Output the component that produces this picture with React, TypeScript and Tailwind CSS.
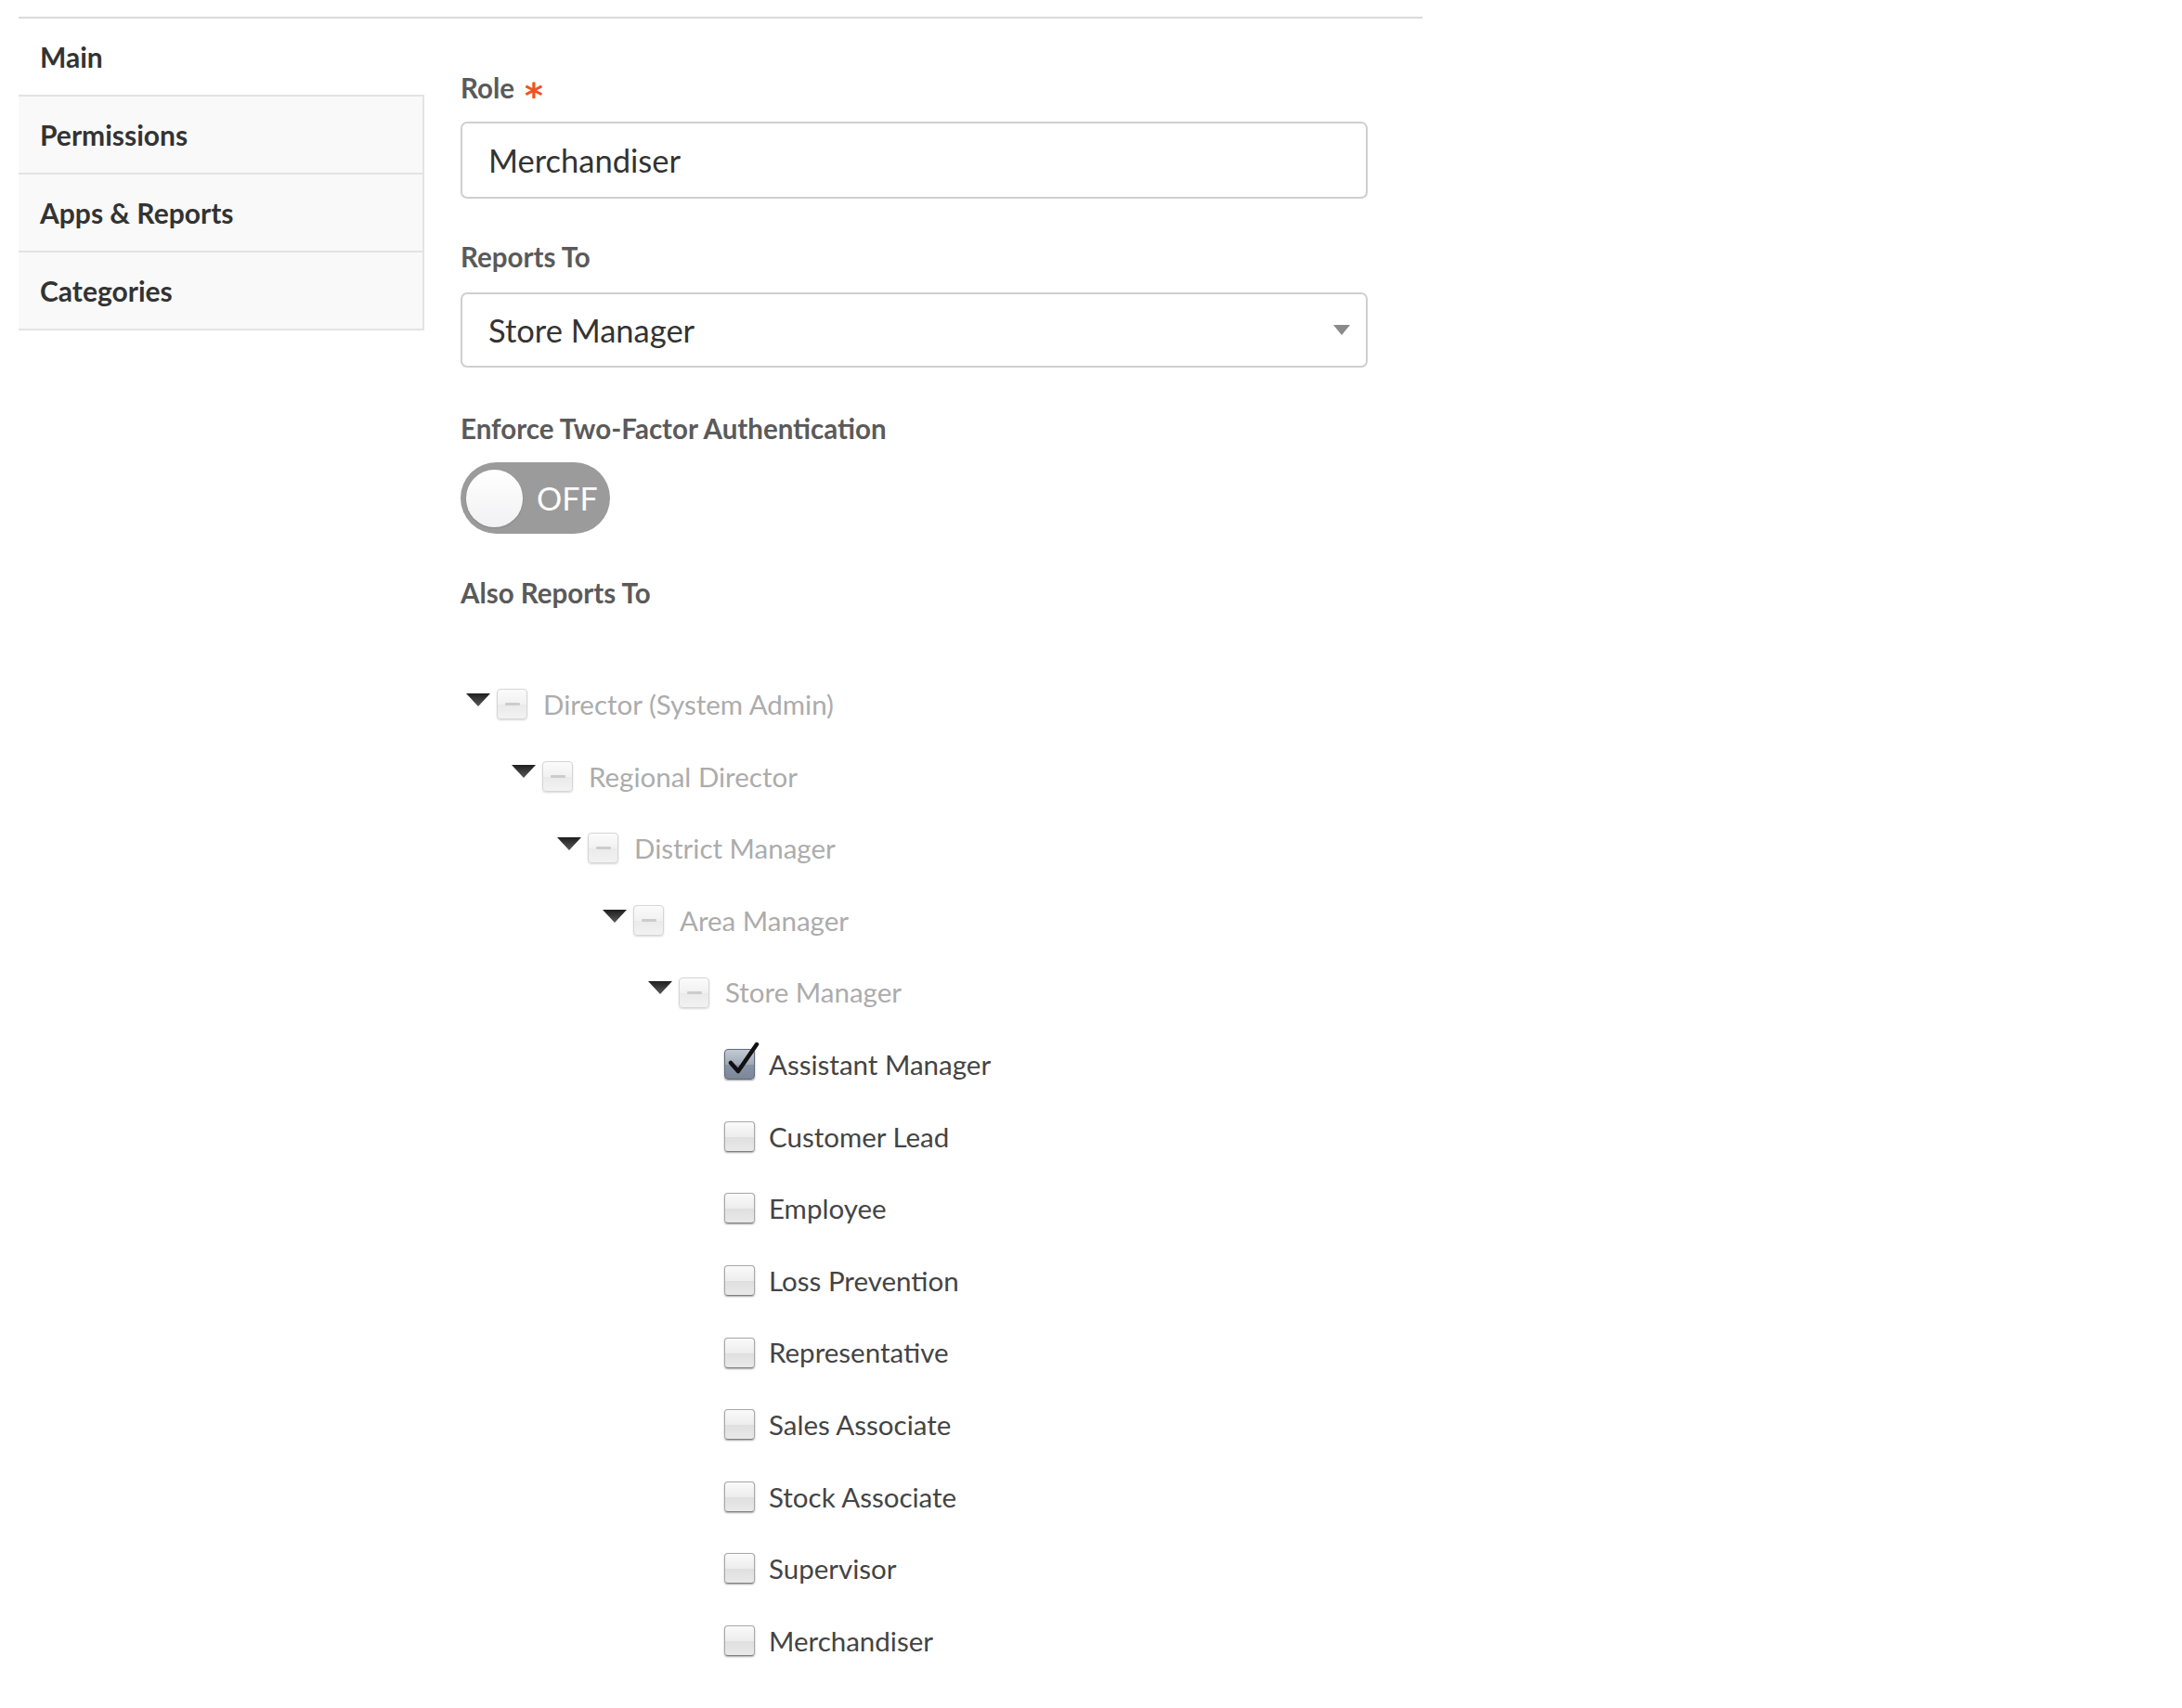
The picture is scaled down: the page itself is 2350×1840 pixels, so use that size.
import React from "react";

const font = { fontFamily: "Lato, 'Noto Sans', sans-serif" };

type State = "parent" | "checked" | "unchecked";

const padByLevel = [
  "pl-[6px]",
  "pl-[55px]",
  "pl-[104px]",
  "pl-[153px]",
  "pl-[202px]",
  "pl-[251px]",
];

function Arrow() {
  return (
    <svg width="26" height="14" viewBox="0 0 26 14" className="-mt-[10px]">
      <defs>
        <linearGradient id="ag" x1="0" y1="0" x2="0" y2="1">
          <stop offset="0" stopColor="#1e1e1e" />
          <stop offset="1" stopColor="#5a5a5a" />
        </linearGradient>
      </defs>
      <polygon points="0,0 26,0 13,14" fill="url(#ag)" />
    </svg>
  );
}

function Box({ state }: { state: State }) {
  if (state === "parent") {
    return (
      <div className="w-[33px] h-[33px] rounded-[4px] border border-[#d6d6d6] bg-[linear-gradient(#fbfbfb,#f1f1f1_50%,#eaeaea_51%,#f2f2f2)] shadow-[0_1px_2px_rgba(0,0,0,0.15)] flex items-center justify-center">
        <div className="w-[16px] h-[3px] bg-[#cccccc] rounded-[1px]" />
      </div>
    );
  }
  if (state === "checked") {
    return (
      <div className="relative w-[33px] h-[33px]">
        <div className="w-[33px] h-[33px] rounded-[4px] border border-[#5f6b7b] bg-[linear-gradient(#c3cad4,#a0aab8_50%,#8894a5_51%,#7c889a)] shadow-[0_1px_2px_rgba(0,0,0,0.4)]" />
        <svg
          width="40"
          height="40"
          viewBox="0 0 40 40"
          className="absolute left-[2px] top-[-8px]"
        >
          <path
            d="M5 23 L13 32 L33 3"
            fill="none"
            stroke="#111"
            strokeWidth="4.5"
            strokeLinecap="round"
            strokeLinejoin="round"
          />
        </svg>
      </div>
    );
  }
  return (
    <div className="w-[33px] h-[33px] rounded-[4px] border border-[#a8a8a8] border-b-[#7f7f7f] bg-[linear-gradient(#fafafa,#ededed_50%,#dfdfdf_51%,#e9e9e9)] shadow-[0_1px_2px_rgba(0,0,0,0.35)]" />
  );
}

function TreeRow({
  level,
  label,
  state,
}: {
  level: number;
  label: string;
  state: State;
}) {
  return (
    <div className={`h-[77.6px] flex items-center ${padByLevel[level]}`}>
      <div className="w-[26px] flex justify-center">
        {state === "parent" ? <Arrow /> : null}
      </div>
      <div className="ml-[7px]">
        <Box state={state} />
      </div>
      <span
        className={`${
          state === "parent" ? "ml-[17px] text-[#acacac]" : "ml-[15px] text-[#444444]"
        } text-[29.5px] leading-none`}
      >
        {label}
      </span>
    </div>
  );
}

function Label({ children }: { children: React.ReactNode }) {
  return (
    <div className="text-[29.5px] leading-[36px] font-bold text-[#5a5a5a]">
      {children}
    </div>
  );
}

export default function App() {
  const tabs = ["Permissions", "Apps & Reports", "Categories"];
  const leaves = [
    "Customer Lead",
    "Employee",
    "Loss Prevention",
    "Representative",
    "Sales Associate",
    "Stock Associate",
    "Supervisor",
    "Merchandiser",
  ];
  return (
    <div className="w-[2350px] min-h-[1840px] bg-white pt-[18px]" style={font}>
      <div className="ml-[20px] w-[1512px] border-t-2 border-[#dadada] flex">
        {/* Sidebar */}
        <div className="w-[437px] shrink-0">
          <div className="h-[82px] flex items-center pl-[23px] text-[30px] font-bold text-[#333333]">
            Main
          </div>
          {tabs.map((t, i) => (
            <div
              key={t}
              className={`h-[84px] flex items-center pl-[23px] bg-[#f9f9f9] border-t-2 border-r-2 border-[#e3e3e3] text-[30px] font-bold text-[#333333] ${
                i === tabs.length - 1 ? "border-b-2 h-[86px]" : ""
              }`}
            >
              {t}
            </div>
          ))}
        </div>

        {/* Main form */}
        <div className="ml-[39px] w-[977px] pt-[57px]">
          <div className="flex items-start h-[36px]">
            <Label>Role</Label>
            <span
              className="relative top-[8px] ml-[11px] text-[38px] leading-[36px] font-bold text-[#ec5428]"
              style={{ fontFamily: "'DejaVu Sans', sans-serif" }}
            >
              *
            </span>
          </div>
          <div className="mt-[18px] h-[83px] rounded-[7px] border-2 border-[#cfcfcf] flex items-center pl-[28px] text-[34.5px] text-[#333333]">
            Merchandiser
          </div>

          <div className="mt-[45px]">
            <Label>Reports To</Label>
          </div>
          <div className="mt-[20px] h-[81px] rounded-[7px] border-2 border-[#cfcfcf] flex items-center justify-between pl-[28px] pr-[17px] text-[34.5px] text-[#333333]">
            <span>Store Manager</span>
            <svg width="18" height="11" viewBox="0 0 18 11">
              <polygon points="0,0 18,0 9,11" fill="#8a8a8a" />
            </svg>
          </div>

          <div className="mt-[48px]">
            <Label>Enforce Two-Factor Authentication</Label>
          </div>
          <div className="mt-[18px] w-[161px] h-[77px] rounded-full bg-[#9b9b9b] flex items-center pl-[6px]">
            <div className="w-[61px] h-[62px] rounded-full bg-[linear-gradient(#ffffff,#f1f1f3)] shadow-[0_1px_2px_rgba(0,0,0,0.15)]" />
            <span className="ml-[15px] text-[34px] text-white leading-none">
              OFF
            </span>
          </div>

          <div className="mt-[46px]">
            <Label>Also Reports To</Label>
          </div>

          <div className="mt-[63px]">
            <TreeRow level={0} label="Director (System Admin)" state="parent" />
            <TreeRow level={1} label="Regional Director" state="parent" />
            <TreeRow level={2} label="District Manager" state="parent" />
            <TreeRow level={3} label="Area Manager" state="parent" />
            <TreeRow level={4} label="Store Manager" state="parent" />
            <TreeRow level={5} label="Assistant Manager" state="checked" />
            {leaves.map((l) => (
              <TreeRow key={l} level={5} label={l} state="unchecked" />
            ))}
          </div>
        </div>
      </div>
    </div>
  );
}
